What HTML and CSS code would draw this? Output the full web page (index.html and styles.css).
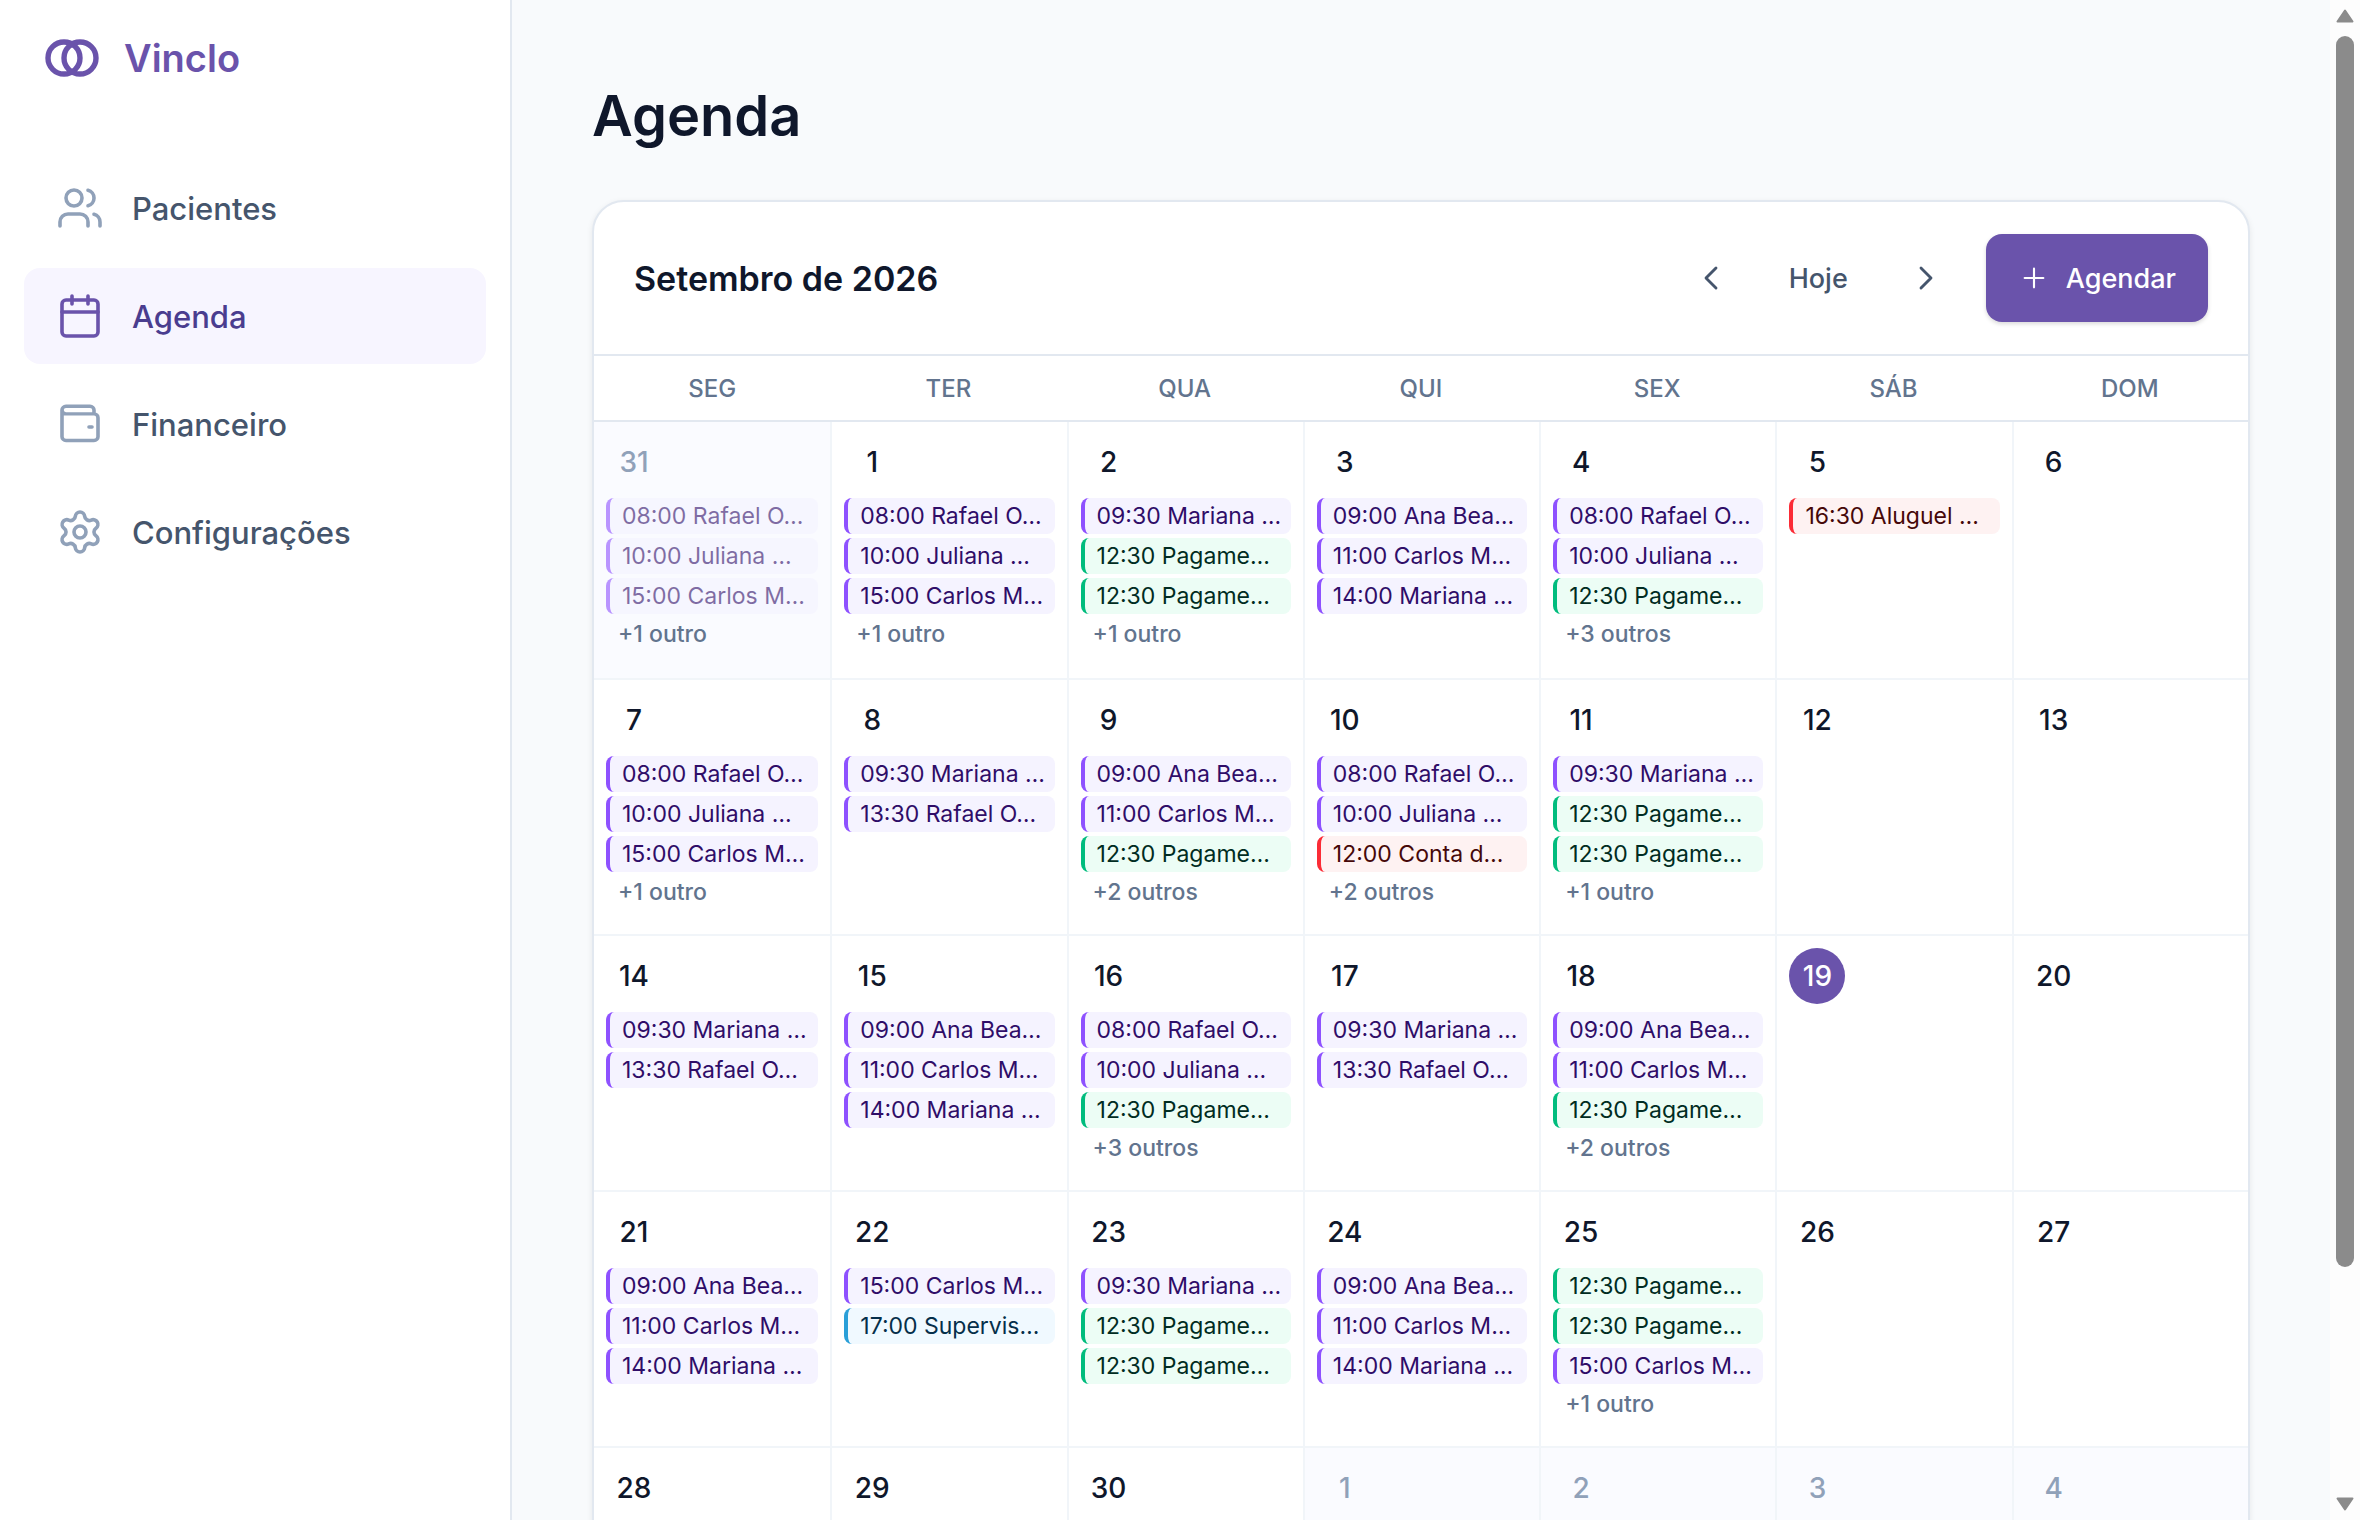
FILE: index.html
```html
<!DOCTYPE html>
<html lang="pt-BR">
<head>
<meta charset="utf-8">
<title>Agenda · Vinclo</title>
<link rel="stylesheet" href="styles.css">
</head>
<body>
<div class="app">
  <aside class="sidebar">
    <a class="brand" href="#">
      <svg class="brand-mark" viewBox="0 0 56 40" fill="none" stroke="currentColor" stroke-width="5.4"><circle cx="20" cy="20" r="16"/><circle cx="36" cy="20" r="16"/></svg>
      <span>Vinclo</span>
    </a>
    <nav class="nav">
      <a class="nav-item" href="#"><svg class="icon" viewBox="0 0 24 24"><path d="M16 21v-2a4 4 0 0 0-4-4H6a4 4 0 0 0-4 4v2"/><circle cx="9" cy="7" r="4"/><path d="M22 21v-2a4 4 0 0 0-3-3.87M16 3.13a4 4 0 0 1 0 7.75"/></svg>Pacientes</a>
      <a class="nav-item active" href="#" aria-current="page"><svg class="icon" viewBox="0 0 24 24"><rect x="3" y="4" width="18" height="18" rx="2"/><path d="M8 2v4M16 2v4M3 10h18"/></svg>Agenda</a>
      <a class="nav-item" href="#"><svg class="icon" viewBox="0 0 24 24"><path d="M19 7V5a2 2 0 0 0-2-2H5a2 2 0 0 0-2 2v14a2 2 0 0 0 2 2h14a2 2 0 0 0 2-2V9a2 2 0 0 0-2-2H5a2 2 0 0 1-2-2" transform="translate(0 .3) scale(1 .95)"/><path d="M16.500 13.500h1.500"/></svg>Financeiro</a>
      <a class="nav-item" href="#"><svg class="icon" viewBox="0 0 24 24"><path d="M9.671 4.136a2.34 2.34 0 0 1 4.659 0 2.34 2.34 0 0 0 3.319 1.915 2.34 2.34 0 0 1 2.33 4.033 2.34 2.34 0 0 0 0 3.831 2.34 2.34 0 0 1-2.33 4.033 2.34 2.34 0 0 0-3.319 1.915 2.34 2.34 0 0 1-4.659 0 2.34 2.34 0 0 0-3.32-1.915 2.34 2.34 0 0 1-2.33-4.033 2.34 2.34 0 0 0 0-3.831A2.34 2.34 0 0 1 6.35 6.051a2.34 2.34 0 0 0 3.319-1.915"/><circle cx="12" cy="12" r="3"/></svg>Configurações</a>
    </nav>
  </aside>
  <main class="content">
    <h1>Agenda</h1>
    <section class="card">
      <header class="card-head">
        <h2>Setembro de 2026</h2>
        <div class="actions">
          <button class="ghost" aria-label="Mês anterior"><svg class="chevron" viewBox="0 0 24 24"><path d="m15 18-6-6 6-6"/></svg></button>
          <button class="ghost today-btn">Hoje</button>
          <button class="ghost" aria-label="Próximo mês"><svg class="chevron" viewBox="0 0 24 24"><path d="m9 18 6-6-6-6"/></svg></button>
          <button class="primary"><svg class="plus" viewBox="0 0 24 24"><path d="M5 12h14M12 5v14"/></svg>Agendar</button>
        </div>
      </header>
      <table class="month">
        <thead><tr><th>SEG</th><th>TER</th><th>QUA</th><th>QUI</th><th>SEX</th><th>SÁB</th><th>DOM</th></tr></thead>
        <tbody id="weeks"></tbody>
      </table>
    </section>
  </main>
  <div class="scrollbar" aria-hidden="true">
    <svg class="arrow" viewBox="0 0 18 14"><path d="M9 1.500 16.500 12.500H1.500z"/></svg>
    <div class="track"><div class="thumb"></div></div>
    <svg class="arrow" viewBox="0 0 18 14"><path d="M9 12.500 1.500 1.500h15z"/></svg>
  </div>
</div>
<script src="calendar.js"></script>
</body>
</html>
```
FILE: calendar.js
```js
// Event kinds: s = session, p = payment received, e = expense, a = appointment
const R = '08:00 Rafael O…', J = '10:00 Juliana …', C15 = '15:00 Carlos M…', C11 = '11:00 Carlos M…';
const M9 = '09:30 Mariana …', M14 = '14:00 Mariana …', A = '09:00 Ana Bea…', R13 = '13:30 Rafael O…';
const P = 'p12:30 Pagame…';
const weeks = [
  [[31, [R, J, C15], '+1 outro', 'other'], [1, [R, J, C15], '+1 outro'], [2, [M9, P, P], '+1 outro'], [3, [A, C11, M14]], [4, [R, J, P], '+3 outros'], [5, ['e16:30 Aluguel …']], [6]],
  [[7, [R, J, C15], '+1 outro'], [8, [M9, R13]], [9, [A, C11, P], '+2 outros'], [10, [R, J, 'e12:00 Conta d…'], '+2 outros'], [11, [M9, P, P], '+1 outro'], [12], [13]],
  [[14, [M9, R13]], [15, [A, C11, M14]], [16, [R, J, P], '+3 outros'], [17, [M9, R13]], [18, [A, C11, P], '+2 outros'], [19, [], '', 'today'], [20]],
  [[21, [A, C11, M14]], [22, [C15, 'a17:00 Supervis…']], [23, [M9, P, P]], [24, [A, C11, M14]], [25, [P, P, C15], '+1 outro'], [26], [27]],
  [[28], [29], [30], [1, [], '', 'other'], [2, [], '', 'other'], [3, [], '', 'other'], [4, [], '', 'other']]
];
const kinds = { p: 'payment', e: 'expense', a: 'appointment' };
document.getElementById('weeks').innerHTML = weeks.map(week => '<tr>' + week.map(([day, events = [], more = '', state = '']) => {
  const items = events.map(text => {
    const kind = kinds[text[0]];
    return `<a href="#" class="event ${kind || 'session'}">${kind ? text.slice(1) : text}</a>`;
  }).join('');
  return `<td class="${state}"><div class="day"><span class="num">${day}</span>${items}${more ? `<a href="#" class="more">${more}</a>` : ''}</div></td>`;
}).join('') + '</tr>').join('');
```
FILE: styles.css
```css
* { box-sizing: border-box; }
body { margin: 0; font-family: Inter, "Liberation Sans", sans-serif; color: #0f172b; background: #f8fafc; }
a { color: inherit; text-decoration: none; }
button { font: inherit; border: 0; background: none; padding: 0; }
svg { display: block; flex: none; }

.app { display: flex; height: 100vh; }

.sidebar { width: 512px; flex: none; background: #fff; border-right: 2px solid #e2e8f0; }
.brand { display: flex; align-items: center; gap: 24px; height: 116px; padding-left: 44px; color: #6a53ab; font-size: 38px; font-weight: 600; }
.brand-mark { width: 56px; height: 40px; }
.nav { display: flex; flex-direction: column; gap: 12px; padding: 44px 24px; }
.nav-item { display: flex; align-items: center; gap: 28px; height: 96px; padding-left: 32px; border-radius: 16px; font-size: 31px; font-weight: 500; color: #45556c; }
.nav-item.active { background: #f7f5ff; color: #4a3d8f; }
.icon { width: 48px; height: 48px; fill: none; stroke: #90a1b9; stroke-width: 1.8; stroke-linecap: round; stroke-linejoin: round; }
.active .icon { stroke: #6a53ab; }

.content { flex: 1; min-width: 0; padding: 80px; overflow-y: auto; scrollbar-width: none; }
h1 { margin: 0 0 48px; font-size: 56px; line-height: 72px; font-weight: 600; }

.card { background: #fff; border: 2px solid #e2e8f0; border-radius: 32px; box-shadow: 0 2px 6px rgba(0, 0, 0, .08); overflow: hidden; }
.card-head { display: flex; align-items: center; justify-content: space-between; padding: 32px 40px; border-bottom: 2px solid #e2e8f0; }
h2 { margin: 0; font-size: 34px; font-weight: 600; }
.actions { display: flex; align-items: center; }
.ghost { display: flex; align-items: center; justify-content: center; height: 72px; min-width: 72px; color: #45556c; font-size: 27px; font-weight: 500; }
.today-btn { padding: 0 42px; }
.chevron { width: 40px; height: 40px; fill: none; stroke: currentColor; stroke-width: 1.7; stroke-linecap: round; stroke-linejoin: round; }
.primary { display: flex; align-items: center; gap: 16px; height: 88px; margin-left: 24px; padding: 0 32px; border-radius: 16px; background: #6a53ab; color: #fff; font-size: 27px; font-weight: 500; box-shadow: 0 2px 4px rgba(0, 0, 0, .15); }
.plus { width: 32px; height: 32px; fill: none; stroke: currentColor; stroke-width: 1.6; stroke-linecap: round; }

.month { width: 100%; table-layout: fixed; border-spacing: 0; }
th { height: 66px; padding: 0; border-bottom: 2px solid #e2e8f0; color: #62748e; font-size: 24px; font-weight: 500; }
td { height: 256px; padding: 0; vertical-align: top; }
td + td { border-left: 2px solid #f1f5f9; }
tr + tr td { border-top: 2px solid #f1f5f9; }
.day { display: flex; flex-direction: column; gap: 4px; padding: 12px; }
.num { display: flex; align-items: center; justify-content: center; width: 56px; height: 56px; margin-bottom: 4px; border-radius: 28px; font-size: 28px; font-weight: 500; }
.event { height: 36px; padding-left: 12px; border-left: 4px solid; border-radius: 8px; font-size: 23px; line-height: 36px; white-space: nowrap; overflow: hidden; }
.session { background: #f5f3ff; border-color: #8e51ff; color: #2f0d68; }
.payment { background: #ecfdf5; border-color: #00bc7d; color: #002c22; }
.expense { background: #fef2f2; border-color: #fb2c36; color: #460809; }
.appointment { background: #f0f9ff; border-color: #2a9fd8; color: #052f4a; }
.more { padding-left: 12px; color: #62748e; font-size: 23px; line-height: 32px; font-weight: 500; }
.other { background: #fafbff; }
.other .num { color: #90a1b9; }
.other .event { opacity: .6; }
.today .num { background: #6a53ab; color: #fff; }

.scrollbar { display: flex; flex-direction: column; align-items: center; gap: 13px; width: 30px; padding: 9px 0; background: #fdfdfd; }
.arrow { width: 18px; height: 14px; fill: #8b8b8b; stroke: #8b8b8b; stroke-width: 2; stroke-linejoin: round; }
.track { flex: 1; width: 18px; }
.thumb { height: 85%; border-radius: 9px; background: #8b8b8b; }
```
